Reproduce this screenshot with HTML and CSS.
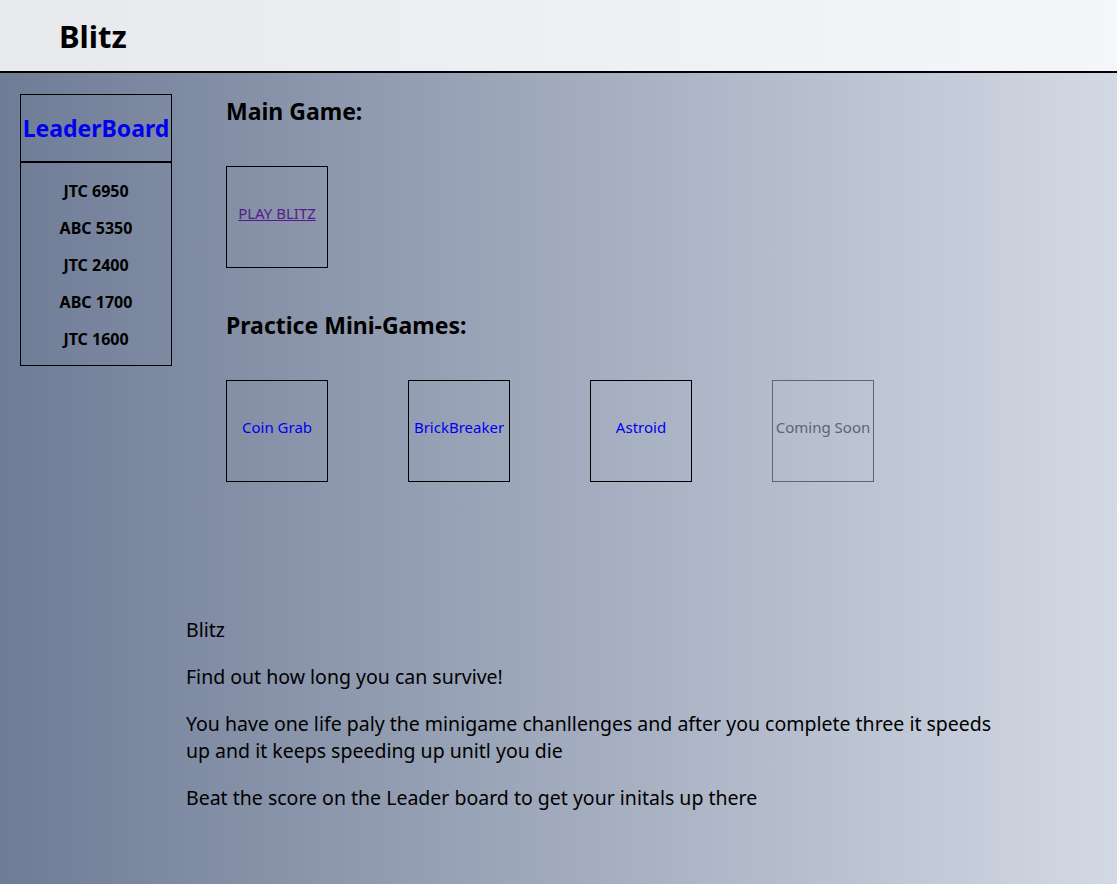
FILE: index.html
```html
<!DOCTYPE html>
<html lang="en">
<head>
    <meta charset="UTF-8">
    <meta name="viewport" content="width=device-width, initial-scale=1.0">
    <title>Blitz</title>
    <link rel="stylesheet" href="styles.css">
</head>
<body>
    <header class="top">
        <h1>Blitz</h1>
    </header>

    <div class="page">
        <aside class="leaderboard">
            <div class="lb-title">LeaderBoard</div>
            <ul class="scores">
                <li>JTC 6950</li>
                <li>ABC 5350</li>
                <li>JTC 2400</li>
                <li>ABC 1700</li>
                <li>JTC 1600</li>
            </ul>
        </aside>

        <main class="games">
            <h2>Main Game:</h2>
            <div class="row">
                <a class="tile main-link" href="#">PLAY BLITZ</a>
            </div>

            <h2>Practice Mini-Games:</h2>
            <div class="row">
                <a class="tile" href="#">Coin Grab</a>
                <a class="tile" href="#">BrickBreaker</a>
                <a class="tile" href="#">Astroid</a>
                <span class="tile soon">Coming Soon</span>
            </div>
        </main>
    </div>

    <section class="about">
        <p>Blitz</p>
        <p>Find out how long you can survive!</p>
        <p>You have one life paly the minigame chanllenges and after you complete three it speeds up and it keeps speeding up unitl you die</p>
        <p>Beat the score on the Leader board to get your initals up there</p>
    </section>
</body>
</html>
```

FILE: styles.css
```css
html {
    min-height: 100%;
    background: linear-gradient(to right, #6f7c96, #d3d9e4);
}

body {
    margin: 0;
    min-height: 884px;
    font-family: 'Noto Sans', 'Open Sans', sans-serif;
    color: #000;
}

.top {
    height: 71px;
    display: flex;
    align-items: center;
    padding-left: 59px;
    background: linear-gradient(to right, #e8e9ed, #f5f6f9);
    border-bottom: 2px solid #000;
}

.top h1 {
    margin: 0;
    font-size: 31px;
    font-weight: bold;
}

.page {
    display: flex;
    align-items: flex-start;
    padding: 21px 20px 0;
}

.leaderboard {
    width: 150px;
    border: 1px solid #000;
}

.lb-title {
    height: 66px;
    display: flex;
    align-items: center;
    justify-content: center;
    border-bottom: 2px solid #000;
    color: #0000ee;
    font-size: 23px;
    font-weight: bold;
    white-space: nowrap;
}

.scores {
    list-style: none;
    margin: 0;
    padding: 10px 0 7px;
}

.scores li {
    text-align: center;
    font-size: 16px;
    font-weight: bold;
    line-height: 37px;
}

.games {
    margin-left: 54px;
}

.games h2 {
    margin: 2px 0 40px;
    font-size: 23px;
    font-weight: bold;
    line-height: 30px;
}

.row {
    display: flex;
    gap: 80px;
    margin-bottom: 42px;
}

.tile {
    box-sizing: border-box;
    width: 102px;
    height: 102px;
    padding-bottom: 8px;
    display: flex;
    align-items: center;
    justify-content: center;
    border: 1px solid #000;
    color: #0000ee;
    font-size: 15px;
    text-decoration: none;
    white-space: nowrap;
}

.tile.main-link {
    color: #551a8b;
    text-decoration: underline;
}

.tile.soon {
    color: #5f6470;
    border-color: #5f6470;
}

.about {
    width: 820px;
    margin: 92px 0 0 186px;
}

.about p {
    margin: 0 0 20px;
    font-size: 19.5px;
    line-height: 27px;
}
```
